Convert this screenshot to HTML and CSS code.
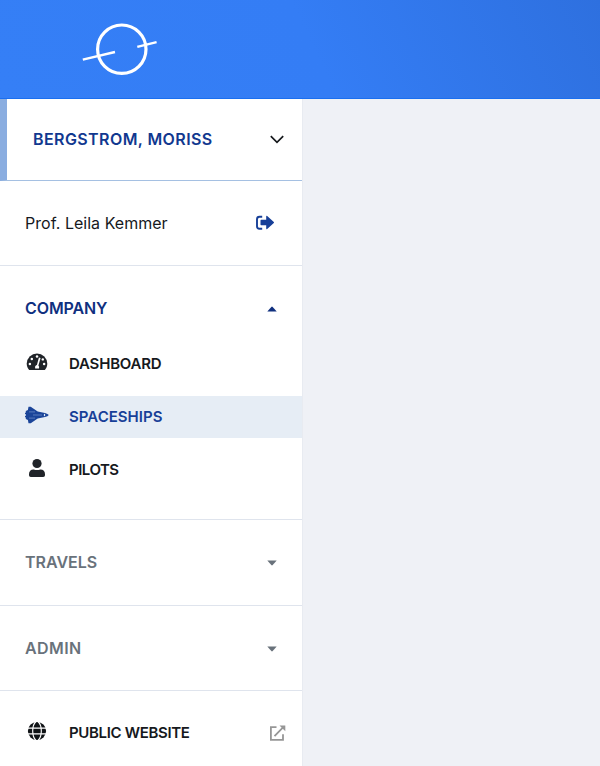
FILE: index.html
```
<!DOCTYPE html>
<html lang="en">
<head>
<meta charset="utf-8">
<title>Spaceships</title>
<link rel="stylesheet" href="styles.css">
</head>
<body>
<header class="topbar">
  <svg class="logo" width="76" height="56" viewBox="0 0 76 56" fill="none" stroke="#fff">
    <circle cx="39.8" cy="28.2" r="24.2" stroke-width="3.2"/>
    <path d="M.8 38.6 33 31M55.300 25.900 74.600 21.100" stroke-width="2.500"/>
  </svg>
</header>
<div class="layout">
  <nav class="sidebar">
    <div class="account">
      <span class="account-name">BERGSTROM, MORISS</span>
      <svg width="16" height="10" viewBox="0 0 16 10" fill="none" stroke="#16191d" stroke-width="1.7"><path d="M1.8 2.2 8 8.4 14.2 2.2"/></svg>
    </div>
    <div class="user">
      <span class="user-name">Prof. Leila Kemmer</span>
      <svg width="20" height="16" viewBox="0 0 20 16"><path d="M7.2 1.700H4.500Q2 1.700 2 4.200v7.100q0 2.500 2.500 2.500h2.700" fill="none" stroke="#173f98" stroke-width="1.9"/><path d="M6.2 4.700h5V1.500Q11.300.3 12.200 1L18.800 7q.5.5 0 1L12.200 14.100q-.9.6-1-.5v-3.300h-5Q5.500 10.300 5.500 9.600V5.400Q5.500 4.700 6.200 4.700Z" fill="#173f98"/></svg>
    </div>
    <section class="group group-open">
      <div class="group-head active"><span class="t-company">COMPANY</span><svg width="10" height="6" viewBox="0 0 10 6"><path d="M.3 5.500 4.300.9Q5 .2 5.700.9L9.700 5.500Z" fill="currentColor"/></svg></div>
      <a class="item">
        <svg class="icon" width="24" height="20" viewBox="0 0 24 20"><path d="M4.200 18C2.500 16 1.700 14 1.700 11.800a10.300 10.300 0 0 1 20.600 0c0 2.200-.8 4.200-2.500 6.200Z" fill="#202429"/><g fill="#fff"><circle cx="12" cy="4.600" r="1.250"/><circle cx="6.800" cy="6.900" r="1.250"/><circle cx="4.900" cy="12.100" r="1.250"/><circle cx="19.100" cy="12.100" r="1.250"/><circle cx="17.800" cy="7.400" r="1.200"/><path d="m13.900 5.600 1.700.5-2.200 7.400q1.200 1.100.6 2.900h-3.800q-.7-2.600 1.700-3.300Z"/></g></svg>
        <span class="t-dashboard">DASHBOARD</span>
      </a>
      <a class="item current">
        <svg class="icon" width="24" height="18" viewBox="0 0 24 18"><path d="M3.500.800h2.200l7 4.800 7.300 1.300q3 .8 3.800 2.100-.8 1.300-3.800 2.100l-7.300 1.300-7 4.800H3.500l-.6-3.300L.8 13V11.200H0V9.800h1V8.200H0V6.800h.8V5l2.100-.9Z" fill="#1b4599"/><path d="M4 5.900h6M4 12.100h6M8 9h9" fill="none" stroke="#7d9bd0" stroke-width=".65"/><path d="M18.900 7.900h1.200v2.200h-1.200Z" fill="#dfe8f3"/></svg>
        <span class="t-spaceships">SPACESHIPS</span>
      </a>
      <a class="item">
        <svg class="icon" width="24" height="20" viewBox="0 0 24 20" fill="#202429"><circle cx="12" cy="5.500" r="4.600"/><path d="M4 16.200q0-4.800 4.700-4.800 3.300 1.200 6.600 0 4.700 0 4.700 4.800v1q0 1.800-1.800 1.800H5.800Q4 19 4 17.200Z"/></svg>
        <span class="t-pilots">PILOTS</span>
      </a>
    </section>
    <section class="group">
      <div class="group-head"><span class="t-travels">TRAVELS</span><svg width="10" height="6" viewBox="0 0 10 6"><path d="M.3.500 4.300 5.100Q5 5.800 5.700 5.100L9.700.500Z" fill="currentColor"/></svg></div>
    </section>
    <section class="group group-last">
      <div class="group-head"><span class="t-admin">ADMIN</span><svg width="10" height="6" viewBox="0 0 10 6"><path d="M.3.500 4.300 5.100Q5 5.800 5.700 5.100L9.700.500Z" fill="currentColor"/></svg></div>
    </section>
    <a class="item public">
      <svg class="icon" width="24" height="20" viewBox="0 0 24 20"><circle cx="12" cy="10" r="9.100" fill="#101316"/><path d="M2.500 7.100h19M2.500 12.900h19M11 .5C6.600 4.500 6.600 15.500 11 19.500M13 .5c4.400 4 4.400 15 0 19" fill="none" stroke="#fff" stroke-width="1.150"/></svg>
      <span class="t-public">PUBLIC WEBSITE</span>
      <svg class="external" width="18" height="18" viewBox="0 0 18 18" fill="none" stroke="#969696" stroke-width="1.800"><path d="M8.500 3.200H2.900v12.700h12.100V10.300M6.500 12.200 15.300 3.200"/><path d="M11.500 1.500H17.300V7.300Z" fill="#969696" stroke="none"/></svg>
    </a>
  </nav>
  <main class="content"></main>
</div>
</body>
</html>
```

FILE: styles.css
```
* { box-sizing: border-box; }
body {
  margin: 0;
  height: 766px;
  overflow: hidden;
  background: #eff1f6;
  color: #16191d;
  font: 600 16px/20px Inter, "Liberation Sans", sans-serif;
}
svg { display: block; flex: none; }
.topbar {
  height: 99px;
  padding: 21px 0 0 82px;
  border-bottom: 1px solid #1a6ff0;
  background: linear-gradient(65deg, #357ff6 0%, #347df5 52%, #2e70df 100%);
}
.layout { display: flex; height: 667px; }
.sidebar {
  width: 303px;
  background: #fff;
  border-right: 1px solid #e8ebf1;
}
.content { flex: 1; }
.account {
  display: flex;
  align-items: center;
  justify-content: space-between;
  height: 82px;
  padding: 0 17px 2px 26px;
  border-left: 7px solid #8aade0;
  border-bottom: 1px solid #a5c0e2;
  color: #11388f;
}
.user {
  display: flex;
  align-items: center;
  justify-content: space-between;
  height: 85px;
  padding: 0 27px 0 25px;
  border-bottom: 1px solid #dfe4ed;
  font-weight: 400;
}
.group {
  height: 86px;
  border-bottom: 1px solid #dfe4ed;
}
.group-open { height: 254px; }
.group-last { height: 85px; }
.group-head {
  display: flex;
  align-items: center;
  justify-content: space-between;
  height: 85px;
  padding: 0 25px;
  color: #69727b;
}
.group-head span { margin-top: -2px; }
.group-head.active { color: #10307f; }
.group-open .group-head { height: 72px; padding-top: 13px; }
.item {
  display: flex;
  align-items: center;
  height: 42px;
  padding-left: 25px;
  margin-bottom: 11px;
  font-size: 15px;
}
.item span { margin-top: -1px; }
.icon { margin-right: 20px; }
.item .icon { position: relative; top: -2px; }
.group-open .item:nth-of-type(1) { margin-top: 5px; }
.current { background: #e6edf5; color: #173f98; }
.public { height: 84px; padding-right: 16px; margin: 0; }
.external { margin-left: auto; }
.account-name { letter-spacing: 0.41px; }
.user-name { letter-spacing: 0.03px; }
.t-company { letter-spacing: -0.1px; }
.t-dashboard { letter-spacing: -0.2px; }
.t-spaceships { letter-spacing: 0.03px; }
.t-pilots { letter-spacing: -0.5px; }
.t-admin { letter-spacing: 0.4px; }
.t-public { letter-spacing: -0.33px; }
```
